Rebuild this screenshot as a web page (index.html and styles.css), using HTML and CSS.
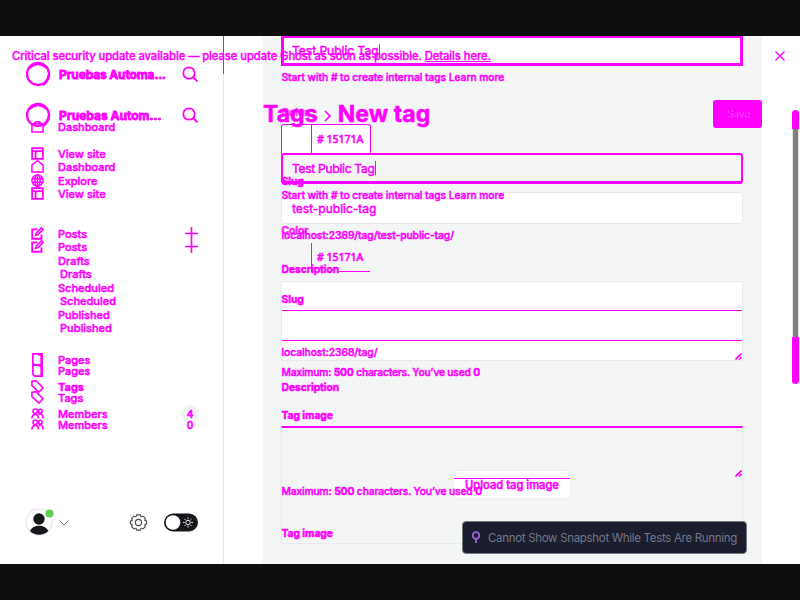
FILE: index.html
```
<!DOCTYPE html>
<html lang="en">
<head>
<meta charset="utf-8">
<title>New tag</title>
<link rel="stylesheet" href="styles.css">
</head>
<body>
<svg width="0" height="0" class="defs">
  <symbol id="ring" viewBox="0 0 26 26"><circle cx="13" cy="13" r="11" fill="none" stroke="#f0f" stroke-width="2.3"/><path d="M4 7 Q13-1 22 7M24 14Q23 20 18 24" fill="none" stroke="#f0f" stroke-width="2.5"/></symbol>
  <symbol id="search" viewBox="0 0 16 16"><circle cx="7" cy="7" r="5.7"/><path d="M11 11l4.5 4.5"/></symbol>
  <symbol id="home" viewBox="0 0 14 14"><path d="M1 13V5.5L7 .8l6 4.7V13z"/></symbol>
  <symbol id="house-cut" viewBox="0 0 14 14"><path d="M1 4h12v9H1zM3 4l2-2h4l2 2"/></symbol>
  <symbol id="site" viewBox="0 0 14 14"><path d="M1.2 1.2h11.6v11.6H1.2zM1 4.5h12M5 4.5V13" stroke-width="1.9"/></symbol>
  <symbol id="globe" viewBox="0 0 14 14"><circle cx="7" cy="7" r="6"/><ellipse cx="7" cy="7" rx="2.8" ry="6"/><path d="M1 5h12M1 9h12M7 1v12"/></symbol>
  <symbol id="edit" viewBox="0 0 14 14"><path d="M7 2.5H1.3v10.2h10V8" stroke-width="2"/><path d="M5 9l.7-2.6L11.3.8l1.8 1.8-5.500 5.600z" stroke-width="1.700"/></symbol>
  <symbol id="plus" viewBox="0 0 16 16"><path d="M8 1v14M1 8h14" stroke-width="1.800"/></symbol>
  <symbol id="page" viewBox="0 0 14 14"><path d="M2 1h10v12H4l-2-2zM11 1v12M7 1l4 2" stroke-width="1.800"/></symbol>
  <symbol id="tag" viewBox="0 0 14 14"><path d="M1 1.500L5.500.8 13 8.500 8.500 13 1 6z" stroke-width="1.700"/></symbol>
  <symbol id="people" viewBox="0 0 14 12"><circle cx="4.500" cy="3.500" r="2.400"/><circle cx="10" cy="3.500" r="2"/><path d="M1 11.500c0-6 7-6 7 0M8 7c3-1.500 5 0 5 4.500" stroke-width="1.700"/></symbol>
  <symbol id="grip" viewBox="0 0 7 7"><path d="M.5 6.500l6-6M4 6.500l2.500-2.500"/></symbol>
</svg>
<div class="screen">
  <main class="stack">
    <div class="base">
      <div class="side">
        <svg class="account" width="175" height="34" viewBox="0 0 175 34">
          <circle cx="15" cy="17" r="13" fill="#fff" stroke="#ececec"/>
          <circle cx="15" cy="14" r="5.700" fill="#15171a"/>
          <path d="M6 26c3-7 15-7 18.300 0-5 5-13.500 5-18.300 0" fill="#15171a"/>
          <circle cx="25.500" cy="8.500" r="4.100" fill="#63cc55"/>
          <path d="M35.500 15.500l4.500 4.500 4.500-4.500" fill="none" stroke="#777" stroke-width="1"/>
          <g fill="none" stroke="#454b50" stroke-width="1.100" transform="translate(114.500 17.500)">
            <circle r="3.100"/>
            <path d="M-1.800-7.600h3.600l.8 2 2-.8 2.300 2.300-.7 1.900 1.900.9v2.600l-1.900.9.7 1.900-2.300 2.300-2-.8-.8 2h-3.600l-.8-2-2 .8-2.300-2.300.7-1.900-1.900-.9v-2.600l1.900-.9-.7-1.900 2.300-2.300 2 .8z"/>
          </g>
          <rect x="140" y="8.500" width="34" height="18" rx="9" fill="#15171a"/>
          <circle cx="149" cy="17.500" r="7.300" fill="#fff"/>
          <g stroke="#fff" fill="none" stroke-width=".9" transform="translate(164 17.500)"><circle r="2.200"/><path d="M0-5v1.700M0 5V3.300M-5 0h1.700M5 0H3.300M-3.500-3.500l1.200 1.200M3.500 3.500L2.300 2.300M-3.500 3.500l1.200-1.200M3.500-3.500L2.300-2.300"/></g>
        </svg>
      </div>
      <div class="panel"></div>
      <div class="gutter"><div class="scroll"></div></div>
    </div>

    <section class="form first">
      <div class="field focus"><span>Test Public Tag</span><i class="caret"></i></div>
      <p class="hint a-hint">Start with # to create internal tags <span>Learn more</span></p>
      <p class="label a-color">Color</p>
      <div class="swatch"><span class="chip"></span><span class="hex"># 15171A</span></div>
      <p class="label a-slug">Slug</p>
      <div class="field plain">test-public-tag</div>
      <p class="hint a-url">localhost:2369/tag/test-public-tag/</p>
      <p class="label a-desc">Description</p>
      <div class="area"><svg class="grip"><use href="#grip"/></svg></div>
      <p class="hint a-max">Maximum: <b>500</b> characters. You’ve used <b>0</b></p>
      <p class="label a-image">Tag image</p>
      <div class="drop"><button class="upload">Upload tag image</button></div>
    </section>

    <section class="form second">
      <header class="head"><h1>Tags</h1><svg class="chev" viewBox="0 0 8 12"><path d="M1 1l5 5-5 5"/></svg><h1>New tag</h1><button class="save">Save</button></header>
      <div class="field clear"><span>Test Public Tag</span><i class="caret"></i></div>
      <p class="hint b-hint">Start with # to create internal tags <span>Learn more</span></p>
      <p class="label b-color">Color</p>
      <div class="swatch cut"><span class="chip"></span><span class="hex"># 15171A</span></div>
      <p class="label b-slug">Slug</p>
      <div class="band"></div>
      <p class="hint b-url">localhost:2368/tag/</p>
      <p class="label b-desc">Description</p>
      <div class="area line"><svg class="grip"><use href="#grip"/></svg></div>
      <p class="hint b-max">Maximum: <b>500</b> characters. You’ve used <b>0</b></p>
      <p class="label b-image">Tag image</p>
    </section>

    <nav class="menu one">
      <div class="brand"><svg class="ring"><use href="#ring"/></svg><b>Pruebas Automa...</b><svg class="search"><use href="#search"/></svg></div>
      <div class="item m20"><svg><use href="#house-cut"/></svg><span>Dashboard</span></div>
      <div class="item"><svg><use href="#site"/></svg><span>View site</span></div>
      <div class="item"><svg><use href="#globe"/></svg><span>Explore</span></div>
      <div class="item gap26"><svg><use href="#edit"/></svg><span>Posts</span><svg class="plus"><use href="#plus"/></svg></div>
      <div class="item sub">Drafts</div>
      <div class="item sub">Scheduled</div>
      <div class="item sub">Published</div>
      <div class="item gap18"><svg><use href="#page"/></svg><span>Pages</span></div>
      <div class="item"><svg><use href="#tag"/></svg><b>Tags</b></div>
      <div class="item"><svg><use href="#people"/></svg><span>Members</span><span class="count pill">4</span></div>
    </nav>

    <nav class="menu two">
      <div class="brand"><svg class="ring"><use href="#ring"/></svg><b>Pruebas Autom...</b><svg class="search"><use href="#search"/></svg></div>
      <div class="item"><svg><use href="#home"/></svg><span>Dashboard</span></div>
      <div class="item"><svg><use href="#site"/></svg><span>View site</span></div>
      <div class="item gap26"><svg><use href="#edit"/></svg><span>Posts</span><svg class="plus"><use href="#plus"/></svg></div>
      <div class="item sub">Drafts</div>
      <div class="item sub">Scheduled</div>
      <div class="item sub">Published</div>
      <div class="item gap18"><svg><use href="#page"/></svg><span>Pages</span></div>
      <div class="item"><svg><use href="#tag"/></svg><span>Tags</span></div>
      <div class="item"><svg><use href="#people"/></svg><span>Members</span><span class="count">0</span></div>
    </nav>

    <div class="alert"><span>Critical security update available — please update Ghost as soon as possible. <u>Details here.</u></span><svg class="close" viewBox="0 0 10 10"><path d="M.5.5l9 9M9.500.5l-9 9"/></svg></div>

    <div class="toast"><svg width="10" height="13" viewBox="0 0 10 13"><circle cx="5" cy="4.500" r="3.300"/><path d="M5 8v4"/></svg><span>Cannot Show Snapshot While Tests Are Running</span></div>
  </main>
</div>
</body>
</html>
```
FILE: styles.css
```
* { box-sizing: border-box; }
body { margin: 0; font-family: Inter, "Liberation Sans", sans-serif; color: #f0f; font-size: 11px; }
h1, p { margin: 0; }
button { font: inherit; color: inherit; border: 0; padding: 0; }
svg { flex: none; fill: none; stroke: #f0f; stroke-width: 1.6; }
.defs { position: absolute; }
.screen { width: 800px; height: 600px; padding: 36px 0; background: #0e0e0e; overflow: hidden; }
.stack { display: grid; grid-template: 528px / 800px; height: 528px; overflow: hidden; background: #fff; }
.stack > * { grid-area: 1 / 1; }

.base { display: grid; grid-template-columns: 224px 39px 499px 38px; }
.side { border-style: solid; border-width: 0 1px 0 0; border-image: linear-gradient(#f0f 39px, #e6e8ea 39px) 1; display: flex; align-items: flex-end; padding: 0 0 25px 24px; }
.side .account { stroke: none; }
.panel { grid-column: 3; background: #f4f6f6; }
.gutter { padding: 74px 1px 0 30px; }
.scroll { height: 274px; border-radius: 4px; background: linear-gradient(#f0f 19px, transparent 19px 227px, #f0f 227px), linear-gradient(90deg, #e5e5e5 1px, #808080 1px 6px, #ddd 6px); }

.form { width: 462px; margin-left: 281px; display: flex; flex-direction: column; -webkit-text-stroke: .5px #f0f; }
.label, .hint { height: 14px; line-height: 14px; font-size: 10.3px; white-space: nowrap; flex: none; }
.label { font-weight: 700; letter-spacing: -.05px; padding-left: .5px; }
.hint { font-weight: 500; letter-spacing: -.06px; padding-left: .5px; }
.field { display: flex; align-items: center; flex: none; height: 30px; padding-left: 11px; font-size: 12px; }
.focus { height: 30px; background: #fff; border: 3px solid #f0f; border-top-width: 2px; padding-left: 8px; }
.clear { height: 31px; border: 2px solid #f0f; border-bottom-width: 3px; padding-left: 9px; border-radius: 3px; margin-top: 25px; letter-spacing: -.27px; }
.plain { height: 32px; margin-top: 4px; background: #fff; border: 1px solid #e7e9ea; border-radius: 2px; padding-left: 10px; }
.caret { width: 1px; height: 14px; background: #f0f; }
.swatch { display: flex; flex: none; width: 90px; height: 30px; margin-top: 5px; border: 1px solid #f0f; border-bottom: 0; border-radius: 3px 3px 0 0; background: #fff; }
.chip { width: 30px; border-right: 1px solid #f0f; }
.hex { padding-left: 5px; font: 500 10.5px/29px "Noto Sans", sans-serif; white-space: nowrap; }
.area { flex: none; height: 80px; margin-top: 5px; border: 1px solid #e7e9ea; border-radius: 2px; background: linear-gradient(#fff 28px, #f0f 28px 29px, #fff 29px 58px, #f0f 58px 59px, #fff 59px); display: flex; align-items: flex-end; justify-content: flex-end; }
.grip { width: 7px; height: 7px; }

.a-hint { margin-top: 4px; }
.a-color { margin-top: 21px; opacity: .75; }
.a-slug { margin-top: 20px; }
.a-url { margin-top: 4px; }
.a-desc { margin-top: 20px; }
.a-max { margin-top: 4px; letter-spacing: -.19px; }
.a-image { margin-top: 29px; }
.drop { flex: none; height: 118px; margin-top: 4px; border: 1px solid #e9ebeb; border-top: 2px solid #f0f; display: flex; justify-content: center; padding-top: 43px; }
.upload { width: 116px; height: 27px; border-radius: 3px; background: linear-gradient(#fff 7px, #f0f 7px 8px, #fff 8px); font-size: 11.2px; font-weight: 500; white-space: nowrap; box-shadow: 0 0 2px #ddd; -webkit-text-stroke: .5px #f0f; }

.head { display: flex; align-items: center; height: 28px; margin: 64px -19px 0 -18px; flex: none; }
h1 { font-size: 23px; line-height: 28px; font-weight: 700; letter-spacing: .05px; white-space: nowrap; }
.chev { width: 8px; height: 12px; margin: 3px 6px 0 6px; }
.save { margin-left: auto; width: 49px; height: 28px; border-radius: 3px; background: #f0f; color: #f0f; font-size: 10px; text-shadow: 1px 0 #ff8cff; }
.b-hint { margin-top: 4px; }
.b-color { margin-top: 21px; opacity: .85; }
.cut { border-color: transparent; background: linear-gradient(#f0f, #f0f) right bottom / 31px 1px no-repeat; }
.cut .hex { line-height: 28px; }
.b-slug { margin-top: 20px; }
.band { flex: none; height: 34px; }
.b-url { margin-top: 5px; }
.b-desc { margin-top: 21px; }
.line { height: 78px; background: linear-gradient(#f0f 2px, transparent 2px) 0 25px no-repeat; border-color: transparent; margin-top: 6px; }
.b-max { margin-top: 6px; letter-spacing: -.14px; }
.b-image { margin-top: 28px; }

.menu { width: 224px; padding: 24px 24px 0; font-weight: 500; -webkit-text-stroke: .5px #f0f; }
.brand { display: flex; align-items: center; height: 28px; font-size: 12px; letter-spacing: -.15px; white-space: nowrap; -webkit-text-stroke: .8px #f0f; }
.ring { width: 26px; height: 26px; margin: 0 8px 0 1px; }
.search { width: 16px; height: 16px; margin-left: auto; margin-right: 2px; stroke-width: 1.8; }
.brand b { width: 110px; }
.item { display: flex; align-items: center; height: 27px; padding-left: 7px; font-size: 11px; }
.item > svg { width: 13px; height: 13px; margin-right: 14px; }
.item > .plus { width: 15px; height: 15px; margin: 0 1px 0 auto; }
.item.sub { padding-left: 34px; }
.m20 { margin-top: 25px; }
.gap26 { margin-top: 26px; }
.gap18 { margin-top: 18px; }
.count { width: 18px; height: 18px; line-height: 18px; text-align: center; margin-left: auto; margin-right: 1px; border-radius: 50%; font-size: 10px; font-weight: 600; }
.pill { background: #f1f3f4; }
.two { padding-top: 65px; }
.two .brand { margin-bottom: 24px; letter-spacing: 0; }
.two .gap26 { margin-top: 26px; }
.two .sub { padding-left: 36px; }
.two .gap18 { margin-top: 16px; }

.alert { height: 40px; display: flex; align-items: center; justify-content: space-between; padding: 0 15px 0 12px; font-size: 11.2px; letter-spacing: -.045px; font-weight: 500; white-space: nowrap; -webkit-text-stroke: .4px #f0f; }
.close { width: 10px; height: 10px; overflow: visible; stroke-width: 1.3; }
.toast { align-self: end; width: 285px; height: 33px; margin: 0 0 10px 462px; display: flex; align-items: center; gap: 7px; padding-left: 8px; background: #1b1e2e; border: 1px solid #777a7d; border-radius: 4px; color: #747789; font-size: 11.5px; letter-spacing: -.3px; white-space: nowrap; }
.toast span { letter-spacing: -.31px; }
.toast svg { stroke: #9b65dc; stroke-width: 1.8; }
```
